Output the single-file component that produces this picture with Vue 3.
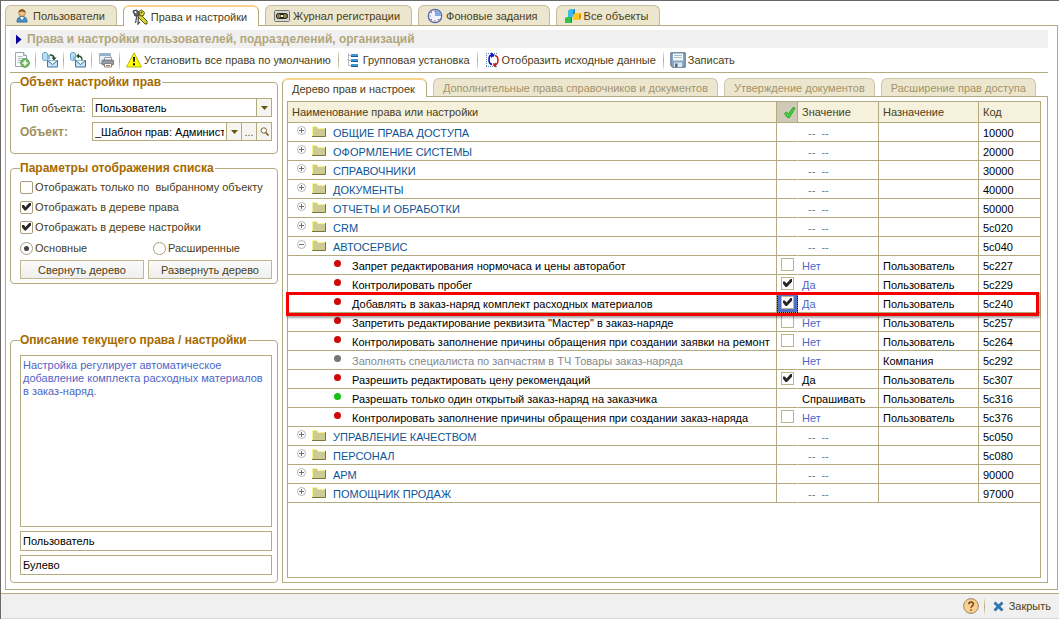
<script setup>
import { ref } from 'vue'

const mainTabs = [
  { title: 'Пользователи', icon: 'user' },
  { title: 'Права и настройки', icon: 'keys' },
  { title: 'Журнал регистрации', icon: 'tape' },
  { title: 'Фоновые задания', icon: 'clock' },
  { title: 'Все объекты', icon: 'cubes' },
]
const activeTab = ref(1)

const rightTabs = [
  'Дерево прав и настроек',
  'Дополнительные права справочников и документов',
  'Утверждение документов',
  'Расширение прав доступа',
]

const group = (name, code, open = false) => ({ kind: 'group', name, code, open })
const item = (name, dot, check, value, tone, target, code, current = false) => ({
  kind: 'item', name, dot, check, value, tone, target, code, current,
})

const rows = ref([
  group('ОБЩИЕ ПРАВА ДОСТУПА', '10000'),
  group('ОФОРМЛЕНИЕ СИСТЕМЫ', '20000'),
  group('СПРАВОЧНИКИ', '30000'),
  group('ДОКУМЕНТЫ', '40000'),
  group('ОТЧЕТЫ И ОБРАБОТКИ', '50000'),
  group('CRM', '5с020'),
  group('АВТОСЕРВИС', '5с040', true),
  item('Запрет редактирования нормочаса и цены авторабот', 'red', false, 'Нет', 'blue', 'Пользователь', '5с227'),
  item('Контролировать пробег', 'red', true, 'Да', 'blue', 'Пользователь', '5с229'),
  item('Добавлять в заказ-наряд комплект расходных материалов', 'red', true, 'Да', 'blue', 'Пользователь', '5с240', true),
  item('Запретить редактирование реквизита "Мастер" в заказ-наряде', 'red', false, 'Нет', 'blue', 'Пользователь', '5с257'),
  item('Контролировать заполнение причины обращения при создании заявки на ремонт', 'red', false, 'Нет', 'blue', 'Пользователь', '5с264'),
  item('Заполнять специалиста по запчастям в ТЧ Товары заказ-наряда', 'gray', null, 'Нет', 'blue', 'Компания', '5с292'),
  item('Разрешить редактировать цену рекомендаций', 'red', true, 'Да', 'black', 'Пользователь', '5с307'),
  item('Разрешать только один открытый заказ-наряд на заказчика', 'green', null, 'Спрашивать', 'black', 'Пользователь', '5с316'),
  item('Контролировать заполнение причины обращения при создании заказ-наряда', 'red', false, 'Нет', 'blue', 'Пользователь', '5с376'),
  group('УПРАВЛЕНИЕ КАЧЕСТВОМ', '5с050'),
  group('ПЕРСОНАЛ', '5с080'),
  group('АРМ', '90000'),
  group('ПОМОЩНИК ПРОДАЖ', '97000'),
])

const onlySelected = ref(false)
const showRights = ref(true)
const showSettings = ref(true)
const mode = ref('main')
const objectType = ref('Пользователь')
const objectName = ref('_Шаблон прав: Администратор')
const description = ref('Настройка регулирует автоматическое добавление комплекта расходных материалов в заказ-наряд.')
const targetKind = ref('Пользователь')
const valueKind = ref('Булево')
</script>

<template>
  <div class="window">
    <nav class="tabs">
      <button v-for="(tab, i) in mainTabs" :key="tab.title" class="tab" :class="{ active: i === activeTab }" @click="activeTab = i">
        <svg v-if="tab.icon === 'user'" class="icon" viewBox="0 0 16 16">
          <path d="M3 14c0-4 2-5.500 5-5.500s5 1.500 5 5.500z" fill="#4a8fc4" stroke="#2f6c9c" />
          <path d="M6 9l2 3 2-3z" fill="#fff" />
          <circle cx="8" cy="5" r="3.300" fill="#f2c08c" stroke="#a0692f" stroke-width=".6" />
          <path d="M4.500 5C4.500 0 11.500 0 11.500 5 10 3 6 3 4.500 5z" fill="#8a4a14" />
        </svg>
        <svg v-else-if="tab.icon === 'keys'" class="icon" viewBox="0 0 16 16">
          <path d="M8 5l7 7v3h-2L6 8z" fill="#d9d52a" stroke="#4b4a10" stroke-width=".9" />
          <path d="M6.500 2.500l3-1.500 3 2.500-1 3-3 .5z" fill="#e8e43a" stroke="#55530f" />
          <path d="M1 2l3.500-1L7 3 6 6.500l-3 .5z" fill="#6f6f6f" stroke="#333" />
          <circle cx="3.400" cy="3" r="1" fill="#fff" />
          <path d="M5 6L3.500 14M6.500 6L6 15l2-2" stroke="#555" fill="none" stroke-width="1.300" />
          <circle cx="9.500" cy="3.500" r="1" fill="#55530f" />
        </svg>
        <svg v-else-if="tab.icon === 'tape'" class="icon" viewBox="0 0 16 16">
          <rect x=".5" y="2.500" width="15" height="11" rx="1" fill="#d8d8d0" stroke="#77776f" />
          <rect x="2" y="5" width="12" height="6" rx="3" fill="#222" />
          <circle cx="4.900" cy="8" r="1.700" fill="#d9d060" /><circle cx="11.100" cy="8" r="1.700" fill="#d9d060" />
          <path d="M4.900 7v2M11.100 7v2" stroke="#333" />
          <rect x="7" y="7" width="2" height="2" fill="#eee" />
        </svg>
        <svg v-else-if="tab.icon === 'clock'" class="icon" viewBox="0 0 16 16">
          <circle cx="8" cy="8" r="6.700" fill="#eef5ff" stroke="#4c6fae" stroke-width="1.300" />
          <path d="M8 8V2a6 6 0 0 1 6 6z" fill="#86a8e4" />
          <path d="M8 2.500v1.200M8 12.300v1.200M2.500 8h1.200M4 4l.8.800M4 12l.8-.8M12 12l-.8-.8" stroke="#d04030" stroke-width="1.200" />
        </svg>
        <svg v-else class="icon" viewBox="0 0 16 16">
          <path d="M3 3l2-2h5v6l-2 2H3z" fill="#3db9ee" /><path d="M8 3l2-2v6L8 9z" fill="#1a7fc0" />
          <path d="M8 7l2-2h6v5l-2 2H8z" fill="#ffc81e" /><path d="M14 7l2-2v5l-2 2z" fill="#d79300" />
          <path d="M0 10l2-1h5v5l-1 1H0z" fill="#2fc24d" /><path d="M6 10l1-1v5l-1 1z" fill="#14812d" />
        </svg>
        <span>{{ tab.title }}</span>
      </button>
    </nav>

    <main class="page">
      <header class="heading">
        <svg class="marker" viewBox="0 0 7 11"><path d="M0 0l6.500 5.500L0 11z" fill="#00009c" /></svg>
        <h1>Права и настройки пользователей, подразделений, организаций</h1>
      </header>

      <div class="toolbar">
        <button aria-label="Добавить">
          <svg class="icon" viewBox="0 0 16 16">
            <path d="M1.500.500h8l3 3v11h-11z" fill="#fff" stroke="#94a7b5" /><path d="M9.500.500v3h3" fill="#dfe8ee" stroke="#94a7b5" />
            <path d="M3.500 4.500h5M3.500 6.500h7M3.500 8.500h4M3.500 10.500h3" stroke="#a9bccb" />
            <circle cx="11" cy="11" r="4.300" fill="#7fbf6c" stroke="#4f9a44" /><path d="M11 8.500v5M8.500 11h5" stroke="#fff" stroke-width="1.700" />
          </svg>
        </button>
        <i class="sep"></i>
        <button aria-label="Загрузить из базы">
          <svg class="icon" viewBox="0 0 16 16">
            <path d="M.5 1.500c0-1.300 5-1.300 5 0v6c0 1.300-5 1.300-5 0z" fill="#b9def2" stroke="#6aa6cc" /><path d="M5 2.500h3v5H5" fill="#7db9dc" />
            <path d="M8 3c3 0 4 1 4 3.500" fill="none" stroke="#1d4d2d" stroke-width="1.400" /><path d="M9.500 5.500h5L12 8.500z" fill="#1d4d2d" />
            <path d="M5.500 8.500h10v6.500h-10z" fill="#c9e3f4" stroke="#3a78a5" /><path d="M5.500 8.500l5 4 5-4" fill="#eef7fc" stroke="#3a78a5" />
          </svg>
        </button>
        <i class="sep"></i>
        <button aria-label="Выгрузить в базу">
          <svg class="icon" viewBox="0 0 16 16">
            <path d="M.5 1.500c0-1.300 5-1.300 5 0v6c0 1.300-5 1.300-5 0z" fill="#b9def2" stroke="#6aa6cc" /><path d="M3 4.500h3v4H3z" fill="#7db9dc" />
            <path d="M12 8c0-3-1-4-4-4" fill="none" stroke="#1d4d2d" stroke-width="1.400" /><path d="M9 1.500v5L6 4z" fill="#1d4d2d" />
            <path d="M5.500 8.500h10v6.500h-10z" fill="#c9e3f4" stroke="#3a78a5" /><path d="M5.500 8.500l5 4 5-4" fill="#eef7fc" stroke="#3a78a5" />
          </svg>
        </button>
        <i class="sep"></i>
        <button aria-label="Печать">
          <svg class="icon" viewBox="0 0 16 16">
            <path d="M1.500 1.500h11v10h-11z" fill="#e8f1f7" stroke="#a3b6c4" /><path d="M2 3h10" stroke="#8fb4d0" stroke-width="2" />
            <path d="M6.500 5.500h7v3h-7z" fill="#fff" stroke="#9a9fa5" />
            <rect x="4" y="8" width="11.500" height="5" rx="1" fill="#959ca4" stroke="#5f666e" stroke-width=".8" />
            <path d="M6.500 11.500h7v3.500h-7z" fill="#fff" stroke="#888" /><path d="M8 13.500h4" stroke="#d06040" />
          </svg>
        </button>
        <i class="sep"></i>
        <button>
          <svg class="icon" viewBox="0 0 16 16">
            <path d="M8 .8L15.500 15H.5z" fill="#ffff00" stroke="#a8a000" stroke-width=".8" stroke-linejoin="round" />
            <path d="M7 5h2l-.4 5H7.400z" fill="#000" /><rect x="7" y="11.300" width="2" height="2" fill="#000" />
          </svg>
          <span>Установить все права по умолчанию</span>
        </button>
        <i class="sep"></i>
        <button>
          <svg class="icon" viewBox="0 0 16 16">
            <path d="M3.500 1v12.500M3.500 3.500H6M3.500 8.500H6M3.500 13.500H6" stroke="#b4bcc2" fill="none" />
            <rect x="6" y="2" width="7" height="3" fill="#3c9ad8" /><rect x="6" y="7" width="7" height="3" fill="#3c9ad8" /><rect x="6" y="12" width="7" height="3" fill="#3c9ad8" />
            <path d="M6 4.500h7M6 9.500h7M6 14.500h7" stroke="#155a92" />
          </svg>
          <span>Групповая установка</span>
        </button>
        <i class="sep"></i>
        <button>
          <svg class="icon" viewBox="0 0 16 16">
            <path d="M2.500 1v14M2 1.500h11M2 14.500h11M5 4.500h6M5 11.500h6" stroke="#5e86b4" stroke-dasharray="1 1" fill="none" />
            <path d="M8 3C4 3 4 12 8 12.500" fill="none" stroke="#0a14c8" stroke-width="1.600" /><path d="M7 .5L11 3 7 6z" fill="#0a14c8" />
            <path d="M11 3.500c4 1 4 8.500 0 9.500" fill="none" stroke="#d01818" stroke-width="1.500" /><path d="M12 10.500v5L8.500 13z" fill="#d01818" />
          </svg>
          <span>Отобразить исходные данные</span>
        </button>
        <i class="sep"></i>
        <button>
          <svg class="icon" viewBox="0 0 16 16">
            <path d="M.8.800h14.400v14.400H2.500L.8 13.500z" fill="#86a8c4" stroke="#4e6c88" />
            <rect x="3" y="1.500" width="10" height="7" fill="#f4f8fb" /><path d="M4 3.500h8M4 5.500h8" stroke="#a9bccb" />
            <rect x="4" y="10.500" width="8" height="4.500" fill="#dfe7ee" /><rect x="5" y="11.500" width="2.500" height="3.500" fill="#4e6c88" />
          </svg>
          <span>Записать</span>
        </button>
      </div>

      <div class="body">
        <aside class="side">
          <fieldset class="object">
            <legend>Объект настройки прав</legend>
            <div class="line">
              <label for="type">Тип объекта:</label>
              <div class="combo">
                <select id="type" v-model="objectType"><option>Пользователь</option><option>Подразделение</option></select>
                <span class="cell" aria-hidden="true"><svg viewBox="0 0 7 4"><path d="M0 0h7L3.500 4z" fill="#6b5210" /></svg></span>
              </div>
            </div>
            <div class="line">
              <label for="object" class="strong">Объект:</label>
              <div class="combo">
                <input id="object" v-model="objectName" type="text">
                <button class="cell" aria-label="Выбрать из списка"><svg viewBox="0 0 7 4"><path d="M0 0h7L3.500 4z" fill="#6b5210" /></svg></button>
                <button class="cell">...</button>
                <button class="cell" aria-label="Открыть">
                  <svg class="lens" viewBox="0 0 9 9"><circle cx="3.800" cy="3.500" r="2.700" fill="#fff" stroke="#7a6320" /><path d="M5.500 5.500l3 3" stroke="#7a6320" stroke-width="1.600" /></svg>
                </button>
              </div>
            </div>
          </fieldset>

          <fieldset class="params">
            <legend>Параметры отображения списка</legend>
            <label class="opt"><input v-model="onlySelected" type="checkbox"><span>Отображать только по&nbsp; выбранному объекту</span></label>
            <label class="opt"><input v-model="showRights" type="checkbox"><span>Отображать в дереве права</span></label>
            <label class="opt"><input v-model="showSettings" type="checkbox"><span>Отображать в дереве настройки</span></label>
            <div class="radios">
              <label class="opt"><input v-model="mode" type="radio" name="mode" value="main"><span>Основные</span></label>
              <label class="opt"><input v-model="mode" type="radio" name="mode" value="extended"><span>Расширенные</span></label>
            </div>
            <div class="actions">
              <button>Свернуть дерево</button>
              <button>Развернуть дерево</button>
            </div>
          </fieldset>

          <fieldset class="about">
            <legend>Описание текущего права / настройки</legend>
            <textarea v-model="description" aria-label="Описание"></textarea>
            <input v-model="targetKind" type="text" aria-label="Назначение">
            <input v-model="valueKind" type="text" aria-label="Тип значения">
          </fieldset>
        </aside>

        <section class="content">
          <nav class="subtabs">
            <button v-for="(title, i) in rightTabs" :key="title" class="subtab" :class="{ active: i === 0 }">{{ title }}</button>
          </nav>
          <div class="pane">
            <div class="list">
              <table>
                <colgroup><col><col class="c-check"><col class="c-value"><col class="c-target"><col class="c-code"></colgroup>
                <thead>
                  <tr>
                    <th>Наименование права или настройки</th>
                    <th class="mark"><svg viewBox="0 0 13 13" role="img" aria-label="Отметка"><path d="M1.500 7.500l2-1.500L5.500 8l4.500-6.500 2 .5-5.500 9.500h-2z" fill="#3fd53f" stroke="#28a32c" stroke-linejoin="round" /></svg></th>
                    <th>Значение</th>
                    <th>Назначение</th>
                    <th>Код</th>
                  </tr>
                </thead>
                <tbody>
                  <tr v-for="row in rows" :key="row.code" :class="[row.kind, { current: row.current }]">
                    <td class="name">
                      <div v-if="row.kind === 'group'" class="node">
                        <svg class="toggle" viewBox="0 0 9 9"><circle cx="4.500" cy="4.500" r="4" fill="#fff" stroke="#a3a3a3" stroke-width=".8" /><path :d="row.open ? 'M2 4.500h5' : 'M2 4.500h5M4.500 2v5'" stroke="#6e6e6e" /></svg>
                        <svg class="folder" viewBox="0 0 14 11"><path d="M0 1h5l1 2h7v7H0z" fill="#cccb94" /><path d="M.5 10V.5H5l1 2h7" fill="none" stroke="#f6f48c" /><path d="M0 10.500h13.500V2" fill="none" stroke="#77763c" /></svg>
                        <span>{{ row.name }}</span>
                      </div>
                      <div v-else class="leaf" :class="row.dot"><i class="dot"></i><span>{{ row.name }}</span></div>
                    </td>
                    <td class="check"><input v-if="row.kind === 'item' && row.check !== null" v-model="row.check" type="checkbox" :aria-label="row.name"></td>
                    <td class="value" :class="row.tone">{{ row.kind === 'group' ? '--\u00a0 --' : row.value }}</td>
                    <td>{{ row.target }}</td>
                    <td>{{ row.code }}</td>
                  </tr>
                </tbody>
              </table>
            </div>
          </div>
        </section>
      </div>
    </main>

    <footer class="footer">
      <button aria-label="Справка">
        <svg class="icon" viewBox="0 0 16 16"><circle cx="8" cy="8" r="7.400" fill="#fbcf8e" stroke="#9c8a6c" /><path d="M5.800 6.200c0-3 4.600-3 4.600 0C10.400 7.800 8 7.800 8 9.800M8 11.200v1.600" fill="none" stroke="#6b4a22" stroke-width="1.500" /></svg>
      </button>
      <i class="sep"></i>
      <button class="close">
        <svg class="cross" viewBox="0 0 11 11"><path d="M1.500 1.500l8 8M9.500 1.500l-8 8" stroke="#2f77ae" stroke-width="2.800" /></svg>
        <span>Закрыть</span>
      </button>
    </footer>
  </div>
</template>

<style>
body { background: #fff; }
</style>

<style scoped>
.window, .window * { box-sizing: border-box; }
.window {
  --line: #b3aa80;
  --ink: #4a4018;
  display: flex; flex-direction: column; min-height: 100vh;
  border-top: 1px solid #696969; border-left: 1px solid #696969;
  background: #fff; color: var(--ink);
  font: 11px/14px "Liberation Sans", Arial, sans-serif;
}
button, input, select, textarea { font: inherit; color: inherit; margin: 0; padding: 0; border: 0; background: none; border-radius: 0; }
svg { display: block; flex: none; }
.icon { width: 16px; height: 16px; }

.tabs { display: flex; gap: 6px; padding: 4px 4px 0; }
.tab {
  display: flex; align-items: center; gap: 3px; height: 20px; padding: 0 11px 0 8px;
  border: 1px solid #c4bc98; border-bottom: 0; border-radius: 6px 6px 0 0; background: #ece6cf; white-space: nowrap;
}
.tab.active { position: relative; height: 21px; margin-bottom: -1px; background: #fff; border-color: var(--line); border-top: 2px solid #f8d38c; }

.page { flex: 1; display: flex; flex-direction: column; margin: 0 1px 3px 4px; padding: 4px 9px 6px 4px; border: 1px solid var(--line); }
.heading { display: flex; align-items: center; gap: 5px; height: 18px; padding-left: 6px; background: #f0f0f0; }
.marker { width: 6px; height: 11px; }
h1 { margin: 0; font-size: 12px; line-height: 14px; font-weight: 700; color: #b3a77d; }

.toolbar { display: flex; align-items: center; height: 25px; padding: 0 0 0 4px; border-bottom: 1px solid var(--line); }
.toolbar button { display: flex; align-items: center; gap: 2px; white-space: nowrap; }
.toolbar span { padding-right: 2px; }
.sep { width: 1px; height: 17px; margin: 0 6px 0 5px; background: linear-gradient(#eee8d4, #b3aa80 50%, #eee8d4); }

.body { flex: 1; display: flex; gap: 4px; padding-top: 2px; }
.side { width: 268px; flex: none; display: flex; flex-direction: column; }
fieldset { min-width: 0; margin: 0; padding: 0 5px 4px 9px; border: 1px solid var(--line); border-radius: 4px; }
legend { padding: 0 1px 0 0; font-size: 12px; line-height: 14px; font-weight: 700; color: #a66a00; }
.object { padding-top: 9px; padding-bottom: 12px; }
.line { display: flex; align-items: center; }
.line + .line { margin-top: 5px; }
.line label { width: 72px; flex: none; }
.line .strong { font-size: 12px; font-weight: 700; color: #a08f5a; }
.combo { flex: 1; min-width: 0; display: flex; height: 19px; border: 1px solid var(--line); color: #000; }
.combo select, .combo input { flex: 1; min-width: 0; height: 17px; padding: 0 2px; appearance: none; outline: 0; }
.cell { flex: none; display: flex; align-items: center; justify-content: center; width: 15px; border-left: 1px solid var(--line); background: #f5f4ef; color: #6b5210; }
.cell svg { width: 7px; height: 4px; }
.cell .lens { width: 9px; height: 9px; }

.params { margin-top: 7px; padding-top: 2px; }
.opt { display: flex; align-items: center; gap: 2px; height: 20px; white-space: nowrap; }
input[type="checkbox"], input[type="radio"] {
  appearance: none; flex: none; display: block; width: 13px; height: 13px;
  border: 1px solid #a89e78; border-radius: 2px; background: #fff;
}
input[type="radio"] { border-radius: 50%; }
input[type="checkbox"]:checked::before {
  content: ""; display: block; width: 9px; height: 8px; margin: 1px; background: #262626;
  clip-path: polygon(0 30%, 22% 30%, 38% 56%, 84% 0, 100% 0, 100% 34%, 44% 100%, 28% 100%, 0 60%);
}
input[type="radio"]:checked::before { content: ""; display: block; width: 5px; height: 5px; margin: 3px; border-radius: 50%; background: #444; }
.radios { display: grid; grid-template-columns: 133px 1fr; margin-top: 1px; }
.actions { display: grid; grid-template-columns: 1fr 1fr; gap: 4px; margin-top: 2px; }
.actions button { height: 19px; border: 1px solid #c0b78f; background: linear-gradient(#fafafa, #efefef); }

.about { flex: 1; display: flex; flex-direction: column; gap: 4px; margin-top: 49px; padding-top: 8px; padding-bottom: 7px; }
.about textarea, .about input { display: block; width: 100%; border: 1px solid var(--line); padding: 0 2px; color: #000; outline: 0; }
.about textarea { flex: 1; min-height: 60px; padding: 3px 2px; resize: none; line-height: 13px; color: #4f66c6; }
.about input { flex: none; height: 20px; }

.content { flex: 1; min-width: 0; display: flex; flex-direction: column; padding-top: 3px; }
.subtabs { display: flex; gap: 6px; }
.subtab { height: 18px; padding: 0 9px; border: 1px solid #cdc6a8; border-bottom: 0; border-radius: 6px 6px 0 0; background: #ece6cf; color: #a39468; white-space: nowrap; }
.subtab.active { position: relative; height: 19px; margin-bottom: -1px; padding-right: 11px; background: #fff; color: var(--ink); border-color: var(--line); border-top: 2px solid #f8d38c; }
.pane { flex: 1; display: flex; padding: 4px 6px 4px 4px; border: 1px solid var(--line); }
.list { flex: 1; min-width: 0; border: 1px solid var(--line); }

table { width: 100%; table-layout: fixed; border-collapse: separate; border-spacing: 0; color: #000; }
.c-check { width: 21px; }
.c-value { width: 81px; }
.c-target { width: 100px; }
.c-code { width: 61px; }
th, td { padding: 0 0 0 4px; border-bottom: 1px solid var(--line); border-right: 1px solid var(--line); text-align: left; font-weight: 400; white-space: nowrap; }
th:last-child, td:last-child { border-right: 0; }
th { height: 21px; background: #f5f1dd; color: var(--ink); }
.mark { padding: 0 0 0 6px; background: #cfcab6; }
.mark svg { width: 13px; height: 13px; }
td { height: 19px; padding-top: 2px; line-height: 16px; vertical-align: top; }
.node, .leaf { display: flex; align-items: flex-start; height: 16px; }
.node { padding-left: 5px; color: #0d5496; }
.toggle { width: 9px; height: 9px; margin: 1px 6px 0 0; }
.folder { width: 14px; height: 11px; margin: 1px 7px 0 0; }
.leaf { padding-left: 42px; }
.dot { flex: none; width: 7px; height: 7px; margin: 2px 11px 0 0; border-radius: 50%; background: #cf0808; }
.gray .dot { background: #757575; }
.green .dot { background: #12c212; }
.leaf.gray { color: #85898f; }
.check { border-right-color: transparent; }
.check input { border-radius: 0; border-color: #bdb490; }
.blue { color: #4f66c6; }
.group .value { padding-left: 10px; color: #5c7f92; }
.current { position: relative; }
.current .check { background: #5370c8; outline: 1px dotted #111; outline-offset: -1px; }
.current .name::after { content: ""; position: absolute; inset: -2px 1px -3px -2px; border: 3px solid #f40000; box-shadow: 1px 2px 2px rgba(0, 0, 0, .35); pointer-events: none; }

.footer { display: flex; align-items: center; justify-content: flex-end; height: 26px; padding-right: 8px; border-top: 1px solid var(--line); border-bottom: 1px solid #d8d8d8; background: #f0f0f0; }
.footer .sep { margin: 0 8px 0 5px; }
.close { display: flex; align-items: center; gap: 5px; }
.cross { width: 11px; height: 11px; }
</style>
